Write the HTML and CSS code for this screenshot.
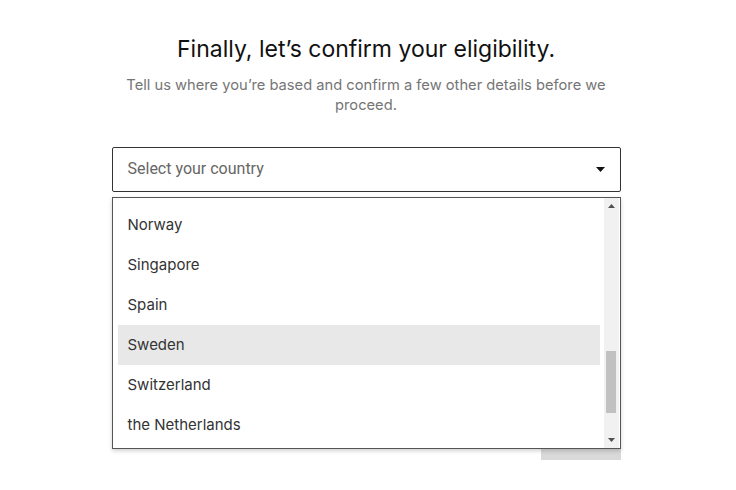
FILE: index.html
```html
<!DOCTYPE html>
<html lang="en">
  <head>
    <meta charset="UTF-8" />
    <meta name="viewport" content="width=device-width, initial-scale=1.0" />
    <title>Confirm eligibility</title>
    <link rel="stylesheet" href="styles.css">
  </head>
  <body>
    <div class="container">
      <h1 class="title">Finally, let’s confirm your eligibility.</h1>
      <p class="subtitle">
        Tell us where you’re based and confirm a few other details before we
        proceed.
      </p>
      <div class="field">
        <div class="select">
          <span class="placeholder">Select your country</span>
          <svg class="caret" width="9" height="5" viewBox="0 0 9 5">
            <path d="M0 0h9L4.5 5z" fill="#111" />
          </svg>
        </div>
        <div class="dropdown">
          <ul class="options">
            <li>Norway</li>
            <li>Singapore</li>
            <li>Spain</li>
            <li class="active">Sweden</li>
            <li>Switzerland</li>
            <li>the Netherlands</li>
          </ul>
          <div class="scrollbar">
            <svg class="arrow" width="7" height="4" viewBox="0 0 7 4">
              <path d="M0 4h7L3.5 0z" fill="#505050" />
            </svg>
            <div class="track">
              <div class="thumb"></div>
            </div>
            <svg class="arrow" width="7" height="4" viewBox="0 0 7 4">
              <path d="M0 0h7L3.5 4z" fill="#505050" />
            </svg>
          </div>
        </div>
      </div>
      <div class="actions">
        <button class="next" type="button">Continue</button>
      </div>
    </div>
  </body>
</html>
```

FILE: styles.css
```css
body {
  margin: 0;
  background: #fff;
  font-family: Inter, "Noto Sans", sans-serif;
}
.container {
  width: 509px;
  margin: 0 auto;
  padding-top: 34px;
  transform: translateX(-2px);
}
.title {
  margin: 0;
  font-size: 23px;
  font-weight: 400;
  line-height: 30px;
  text-align: center;
  color: #111;
}
.subtitle {
  margin: 11px auto 0;
  max-width: 490px;
  font-size: 14.7px;
  line-height: 20px;
  text-align: center;
  color: #757575;
}
.field {
  position: relative;
  margin-top: 32px;
}
.select {
  display: flex;
  align-items: center;
  justify-content: space-between;
  height: 45px;
  box-sizing: border-box;
  padding: 0 15px 2px;
  border: 1px solid #333;
  border-radius: 2px;
}
.caret {
  margin-top: 2px;
}
.placeholder {
  font-family: Roboto, "Liberation Sans", sans-serif;
  font-size: 16px;
  color: #666;
}
.dropdown {
  position: absolute;
  top: 50px;
  left: 0;
  right: 0;
  height: 252px;
  box-sizing: border-box;
  display: flex;
  border: 1px solid #555;
  background: #fff;
  box-shadow: 0 2px 4px rgba(0, 0, 0, 0.18);
  overflow: hidden;
  z-index: 2;
}
.options {
  flex: 1;
  list-style: none;
  margin: 7px 0 0;
  padding: 0 4px 0 5px;
}
.options li {
  height: 40px;
  box-sizing: border-box;
  display: flex;
  align-items: center;
  padding: 0 0 2px 10px;
  font-size: 15px;
  color: #333;
}
.options li.active {
  background: #e8e8e8;
}
.scrollbar {
  width: 15px;
  display: flex;
  flex-direction: column;
  align-items: center;
  background: #f1f1f1;
  margin-right: 1px;
}
.arrow {
  margin: 6px 0;
}
.track {
  flex: 1;
  width: 100%;
  display: flex;
  flex-direction: column;
  align-items: center;
  padding-top: 137px;
}
.thumb {
  width: 10px;
  height: 62px;
  background: #c1c1c1;
}
.actions {
  display: flex;
  justify-content: flex-end;
  margin-top: 224px;
}
.next {
  width: 80px;
  height: 44px;
  border: none;
  background: #d9d9d9;
  color: #fff;
  font-family: Inter, sans-serif;
  font-size: 15px;
}
```
